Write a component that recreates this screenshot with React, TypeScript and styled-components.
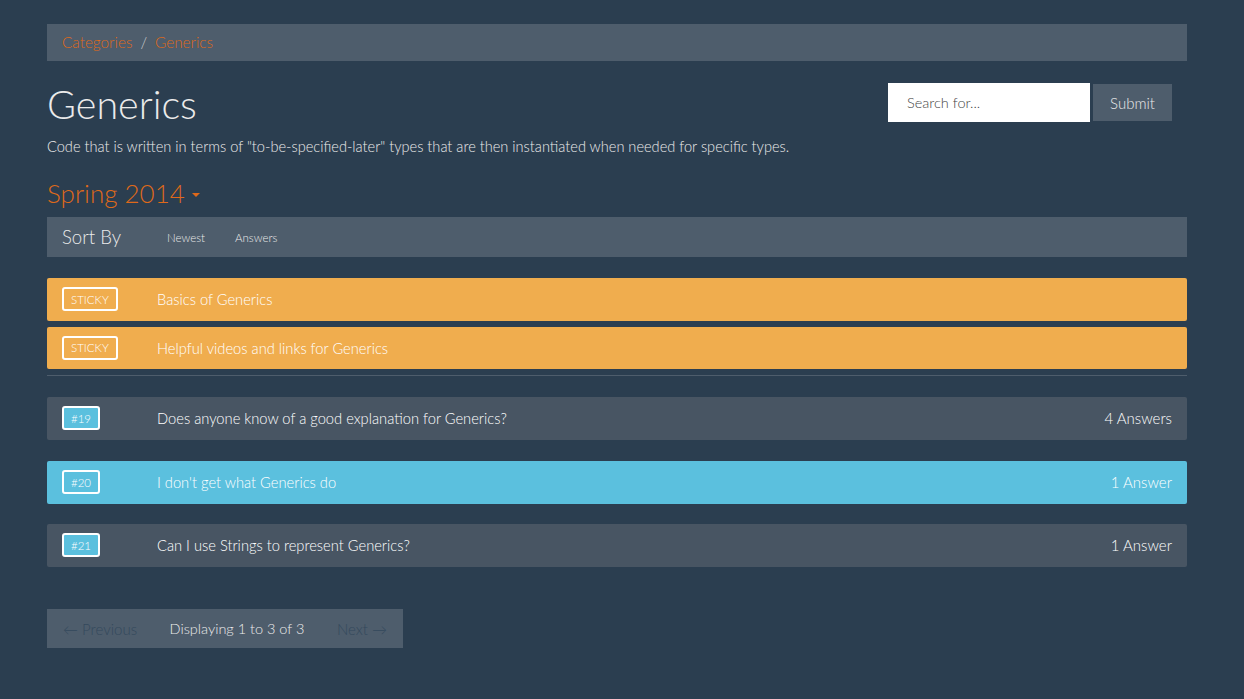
import React from "react";
import styled, { createGlobalStyle } from "styled-components";

const Global = createGlobalStyle`
  html, body { margin: 0; padding: 0; background: #2b3e50; }
  body { font-family: Lato, "Open Sans", sans-serif; font-weight: 300; color: #ebebeb; font-size: 15px; }
  * { box-sizing: border-box; }
`;

const Page = styled.div`
  width: 1140px;
  margin-left: 47px;
  padding-top: 24px;
  padding-bottom: 51px;
`;

const Breadcrumb = styled.nav`
  height: 37px;
  background: #4e5d6c;
  display: flex;
  align-items: center;
  padding: 0 15px;
  font-size: 15.3px;
  gap: 8px;
  padding-bottom: 1px;
`;

const Crumb = styled.a`
  color: #df691a;
  text-decoration: none;
`;

const Sep = styled.span`
  color: #ccc;
`;

const Header = styled.div`
  display: flex;
  justify-content: space-between;
  align-items: flex-start;
  margin-top: 22px;
`;

const TitleBlock = styled.div`
  display: flex;
  flex-direction: column;
`;

const Title = styled.h1`
  margin: 0;
  font-size: 39.5px;
  font-weight: 300;
  line-height: 42px;
  color: #ebebeb;
`;

const Desc = styled.p`
  margin: 12px 0 0;
  font-size: 14.6px;
  line-height: 20px;
`;

const SearchForm = styled.form`
  display: flex;
  align-items: center;
  gap: 3px;
  margin-right: 15px;
`;

const SearchInput = styled.input`
  width: 202px;
  height: 39px;
  border: none;
  background: #fff;
  padding: 0 19px;
  font-family: inherit;
  font-weight: 300;
  font-size: 14.5px;
  color: #333;
  outline: none;
  &::placeholder { color: #444; }
`;

const SubmitBtn = styled.button`
  width: 79px;
  height: 37px;
  border: none;
  background: #4e5d6c;
  color: #ebebeb;
  font-family: inherit;
  font-weight: 300;
  font-size: 15px;
`;

const Term = styled.h3`
  margin: 21px 0 0;
  font-size: 26px;
  font-weight: 300;
  line-height: 30px;
  color: #df691a;
  display: flex;
  align-items: center;
  gap: 7px;
`;

const Caret = styled.span`
  width: 0;
  height: 0;
  border-left: 4px solid transparent;
  border-right: 4px solid transparent;
  border-top: 4px solid #df691a;
  margin-top: 3px;
`;

const SortBar = styled.div`
  margin-top: 9px;
  height: 40px;
  background: #4e5d6c;
  display: flex;
  align-items: center;
  padding: 0 15px;
`;

const SortLabel = styled.span`
  font-size: 18.6px;
  width: 105px;
`;

const SortLink = styled.a`
  font-size: 11.5px;
  font-weight: 300;
  color: #ebebeb;
  margin-right: 30px;
`;

const List = styled.div`
  display: flex;
  flex-direction: column;
`;

const Row = styled.div<{ $bg: string; $mt: number; $h: number }>`
  margin-top: ${(p) => p.$mt}px;
  height: ${(p) => p.$h}px;
  background: ${(p) => p.$bg};
  border-radius: 2px;
  display: flex;
  align-items: center;
  padding: 0 15px 1px;
  font-size: 14.7px;
  color: #fff;
`;

const Tag = styled.span<{ $fill?: boolean }>`
  border: 2px solid #fff;
  border-radius: 3px;
  background: ${(p) => (p.$fill ? "#5bc0de" : "transparent")};
  height: 24px;
  padding: 0 7px;
  display: flex;
  align-items: center;
  font-size: 11.5px;
  font-weight: 300;
  color: #fff;
  flex: 0 0 auto;
`;

const TagSlot = styled.div`
  width: 95px;
  display: flex;
`;

const RowTitle = styled.span`
  flex: 1;
`;

const Count = styled.span`
  font-size: 15px;
`;

const Rule = styled.hr`
  margin: 6px 0 0;
  border: none;
  border-top: 1px solid #4e5d6c;
  height: 0;
`;

const Pager = styled.div`
  margin-top: 42px;
  width: 356px;
  height: 39px;
  background: #4e5d6c;
  display: flex;
  align-items: center;
  justify-content: space-between;
  padding: 0 16px;
  font-size: 15px;
`;

const PagerDisabled = styled.span`
  color: #34495c;
`;

const PagerInfo = styled.span`
  color: #ebebeb;
  font-weight: 300;
  font-size: 14.5px;
`;

const sticky = [
  { title: "Basics of Generics", h: 43, mt: 21 },
  { title: "Helpful videos and links for Generics", h: 42, mt: 6 },
];

const questions = [
  { n: 19, title: "Does anyone know of a good explanation for Generics?", count: "4 Answers", bg: "#485563", mt: 21 },
  { n: 20, title: "I don't get what Generics do", count: "1 Answer", bg: "#5bc0de", mt: 21 },
  { n: 21, title: "Can I use Strings to represent Generics?", count: "1 Answer", bg: "#485563", mt: 20 },
];

export default function App() {
  return (
    <>
      <Global />
      <Page>
        <Breadcrumb>
          <Crumb href="#">Categories</Crumb>
          <Sep>/</Sep>
          <Crumb href="#">Generics</Crumb>
        </Breadcrumb>
        <Header>
          <TitleBlock>
            <Title>Generics</Title>
            <Desc>
              Code that is written in terms of "to-be-specified-later" types that are then instantiated when needed for specific types.
            </Desc>
          </TitleBlock>
          <SearchForm onSubmit={(e) => e.preventDefault()}>
            <SearchInput placeholder="Search for..." />
            <SubmitBtn type="submit">Submit</SubmitBtn>
          </SearchForm>
        </Header>
        <Term>
          Spring 2014 <Caret />
        </Term>
        <SortBar>
          <SortLabel>Sort By</SortLabel>
          <SortLink>Newest</SortLink>
          <SortLink>Answers</SortLink>
        </SortBar>
        <List>
          {sticky.map((s) => (
            <Row key={s.title} $bg="#f0ad4e" $mt={s.mt} $h={s.h}>
              <TagSlot>
                <Tag>STICKY</Tag>
              </TagSlot>
              <RowTitle>{s.title}</RowTitle>
            </Row>
          ))}
          <Rule />
          {questions.map((q) => (
            <Row key={q.n} $bg={q.bg} $mt={q.mt} $h={43}>
              <TagSlot>
                <Tag $fill>#{q.n}</Tag>
              </TagSlot>
              <RowTitle>{q.title}</RowTitle>
              <Count>{q.count}</Count>
            </Row>
          ))}
        </List>
        <Pager>
          <PagerDisabled>← Previous</PagerDisabled>
          <PagerInfo>Displaying 1 to 3 of 3</PagerInfo>
          <PagerDisabled>Next →</PagerDisabled>
        </Pager>
      </Page>
    </>
  );
}
